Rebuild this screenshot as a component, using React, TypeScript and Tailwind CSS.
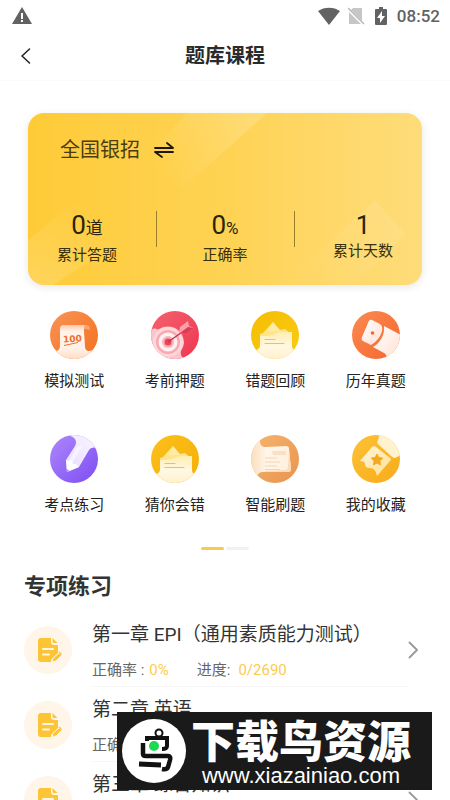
import type { ReactNode } from "react";

type Stat = { value: string; unit?: string; label: string };
type Chapter = { title: string; accuracy: string; progress: string };

const stats: Stat[] = [
  { value: "0", unit: "道", label: "累计答题" },
  { value: "0", unit: "%", label: "正确率" },
  { value: "1", label: "累计天数" },
];

const chapters: Chapter[] = [
  { title: "第一章 EPI（通用素质能力测试）", accuracy: "0%", progress: "0/2690" },
  { title: "第二章 英语", accuracy: "0%", progress: "0/1860" },
  { title: "第三章 综合知识", accuracy: "0%", progress: "0/3120" },
];

// Round badge shared by all menu icons, art is clipped to the circle
function Badge({ id, from, to, children }: { id: string; from: string; to: string; children: ReactNode }) {
  return (
    <svg viewBox="0 0 48 48" className="h-12 w-12" aria-hidden="true">
      <defs>
        <linearGradient id={`${id}-bg`} x1="0" y1="0" x2="1" y2="1">
          <stop offset="0" stopColor={from} />
          <stop offset="1" stopColor={to} />
        </linearGradient>
        <clipPath id={`${id}-clip`}>
          <circle cx="24" cy="24" r="24" />
        </clipPath>
      </defs>
      <g clipPath={`url(#${id}-clip)`}>
        <rect width="48" height="48" fill={`url(#${id}-bg)`} />
        {children}
      </g>
    </svg>
  );
}

function ExamIcon() {
  return (
    <Badge id="exam" from="#f99355" to="#f4701f">
      <defs>
        <linearGradient id="exam-paper" x1="0" y1="0" x2="0" y2="1">
          <stop offset="0" stopColor="#ffc9a8" />
          <stop offset="0.2" stopColor="#fff4ec" />
          <stop offset="0.7" stopColor="#fff1e8" />
          <stop offset="1" stopColor="#ffdcc6" />
        </linearGradient>
      </defs>
      <path d="M14 14h22c-2 1-2 3-2 6l1 15c0 5 3 6 8 4l1 9H2v-9c5 2 8 1 8-5V18c0-3 1-4 4-4z" fill="url(#exam-paper)" />
      <path d="M36 14c3 0 4 2 4 5-1-1-3-1-6-1 0-2 0-4 2-4z" fill="#f9a676" />
      <text x="13" y="31" fontSize="9" fontWeight="700" fontFamily="DejaVu Sans, sans-serif" fill="#ec722f" transform="rotate(-4 22 28)">
        100
      </text>
      <path d="M14 34.500l14-3" stroke="#ec722f" strokeWidth="1" />
    </Badge>
  );
}

function TargetIcon() {
  return (
    <Badge id="target" from="#f4636e" to="#ef3550">
      <path d="M0 20c3-5 5-1 8-2C18 12 32 17 33 31c0 6-4 8-3 12 0 3 2 4 5 3l-9 4H-2z" fill="#fbc5cc" />
      <circle cx="17" cy="31" r="15" fill="#fcd7da" />
      <circle cx="17" cy="31" r="12" fill="#f9a9b1" />
      <circle cx="17" cy="31" r="9.500" fill="#fff1f1" />
      <circle cx="17" cy="31" r="6" fill="#f9b1b8" />
      <circle cx="17" cy="31" r="3.500" fill="#ee4258" />
      <path d="M17 31l20-14" stroke="#c9314b" strokeWidth="1.500" />
      <path d="M28 22l1-6 8-6 1 5 5 2-8 6z" fill="#f9a0a9" />
      <path d="M29 22l8-6 6 1-8 6z" fill="#dd3a54" />
    </Badge>
  );
}

function FolderIcon({ id, from, to }: { id: string; from: string; to: string }) {
  return (
    <Badge id={id} from={from} to={to}>
      <defs>
        <linearGradient id={`${id}-front`} x1="0" y1="0" x2="0" y2="1">
          <stop offset="0" stopColor="#ffeeb0" />
          <stop offset="0.5" stopColor="#fff8e2" />
          <stop offset="1" stopColor="#fff1cf" />
        </linearGradient>
      </defs>
      <path d="M9 23l3-1 10-11 7 8 5-1 6 5v12H9z" fill="#ffe48a" />
      <path d="M16 20l6-9 7 9z" fill="#fff0b6" opacity="0.600" />
      <path d="M9 25c8 0 10 0 14-2l6-2h12v14c0 3 2 5 6 4v10H0V39c6 1 9-1 9-5z" fill={`url(#${id}-front)`} />
      <path d="M14 28.500h10M14 32.500h19" stroke="#f6c23a" strokeWidth="1.200" strokeLinecap="round" />
    </Badge>
  );
}

function TubeIcon() {
  return (
    <Badge id="tube" from="#fc8a50" to="#f4672f">
      <defs>
        <linearGradient id="tube-paper" x1="0" y1="0" x2="1" y2="1">
          <stop offset="0" stopColor="#ffffff" />
          <stop offset="1" stopColor="#ffe0d0" />
        </linearGradient>
      </defs>
      <path d="M32 15l17 9v25H35c0-4-1-6-3-7l-11-6c7-4 12-12 11-21z" fill="url(#tube-paper)" />
      <path d="M20 9l8 4q3 2 2 7c-2 7-6 11-11 14l-8-4q-2-1-1-4l6-14q1-4 4-3z" fill="url(#tube-paper)" />
      <circle cx="20.500" cy="22" r="1.800" fill="#f4672f" />
    </Badge>
  );
}

function PencilIcon() {
  return (
    <Badge id="pencil" from="#ad88fb" to="#7e4df2">
      <defs>
        <linearGradient id="pencil-body" x1="1" y1="0" x2="0" y2="1">
          <stop offset="0" stopColor="#fbf8ff" />
          <stop offset="1" stopColor="#e6dcff" />
        </linearGradient>
      </defs>
      <path d="M16 0c8 1 12 5 9 11l-9 14 1 12 12-5 10-17c3-3 6-3 10-1V-2z" fill="url(#pencil-body)" />
      <path d="M27 12l-8 14 4 1 10-17z" fill="#fff" opacity="0.500" />
      <path d="M16 25l3 1 3-1 1 4 3 0 3 3-12 5z" fill="#fff" />
      <path d="M17 34l3 2-3 1z" fill="#b79bfa" />
    </Badge>
  );
}

function CardIcon() {
  return (
    <Badge id="card" from="#f6b471" to="#e9944c">
      <defs>
        <linearGradient id="card-paper" x1="0" y1="0" x2="1" y2="0">
          <stop offset="0" stopColor="#fbdcba" />
          <stop offset="0.4" stopColor="#fff5e9" />
          <stop offset="1" stopColor="#fff0de" />
        </linearGradient>
      </defs>
      <path d="M-1 8l10-2c0 4 2 6 6 6l20-1q3 0 3 3l2 20q0 3-3 3H14c-4 0-6 0-7 3l-8-2z" fill="url(#card-paper)" />
      <path d="M38 14l2 20q0 3-3 3H14v-1l20-1q3 0 3-3z" fill="#f9dcbb" />
      <path d="M21 16h14v4H22z" fill="#f8d9b5" opacity="0.700" />
      <path d="M14 23h12M14 27h15M14 31h12M14 34.500h15" stroke="#f4cda6" strokeWidth="0.800" />
    </Badge>
  );
}

function TicketIcon() {
  return (
    <Badge id="ticket" from="#fcc235" to="#f9ab1a">
      <defs>
        <linearGradient id="ticket-paper" x1="0" y1="0" x2="1" y2="1">
          <stop offset="0" stopColor="#fff6da" />
          <stop offset="1" stopColor="#ffdf93" />
        </linearGradient>
      </defs>
      <path d="M27 0l22-3v23l-6 3q-2 0-4-2L27 10q-3-2-1-5 1-2 1-5z" fill="#fff2cf" />
      <path d="M20 12q2-2 4 0l14 11q2 1 0 3L25 41c-1-5-3-8-7-8-3 0-5-1-5-4 0-2-2-3-5-3z" fill="url(#ticket-paper)" />
      <path
        d="M25 19l1.800 3.600 3.900.5-2.800 2.800.6 4L25 28l-3.500 1.900.6-4-2.800-2.800 3.900-.5z"
        fill="#f5a91f"
        stroke="#f5a91f"
        strokeLinejoin="round"
      />
    </Badge>
  );
}

const menu = [
  { label: "模拟测试", icon: <ExamIcon /> },
  { label: "考前押题", icon: <TargetIcon /> },
  { label: "错题回顾", icon: <FolderIcon id="review" from="#f4bd05" to="#fbcb12" /> },
  { label: "历年真题", icon: <TubeIcon /> },
  { label: "考点练习", icon: <PencilIcon /> },
  { label: "猜你会错", icon: <FolderIcon id="guess" from="#fcc01b" to="#f5ae08" /> },
  { label: "智能刷题", icon: <CardIcon /> },
  { label: "我的收藏", icon: <TicketIcon /> },
];

function StatusBar() {
  return (
    <div className="flex h-8 shrink-0 items-center justify-between pr-[10px] pl-3 text-[#626262]">
      <svg viewBox="0 0 20 18" className="h-[18px] w-5" fill="currentColor" aria-hidden="true">
        <path fillRule="evenodd" d="M10 0l10 17H0zM9 6v6h2V6zm0 7v2h2v-2z" />
      </svg>
      <div className="flex items-center">
        <svg viewBox="0 0 22 18" className="h-[18px] w-[22px]" fill="currentColor" aria-hidden="true">
          <path d="M0 4C6-.5 16-.5 22 4L11 18z" />
        </svg>
        <svg viewBox="0 0 17 18" className="ml-2 h-[18px] w-[17px]" aria-hidden="true">
          <path d="M5 1h9v13L3 3zM1 5l12 12H1z" fill="#c6c6c6" />
          <path d="M0 1l16 16" stroke="#b5b5b5" strokeWidth="1.300" />
        </svg>
        <svg viewBox="0 0 12 18" className="ml-[10px] h-[18px] w-3" fill="currentColor" aria-hidden="true">
          <path fillRule="evenodd" d="M4 0h4v2h3q1 0 1 1v14q0 1-1 1H1q-1 0-1-1V3q0-1 1-1h3zM7 4l-5 7h3v5l5-7H7z" />
        </svg>
        <span className="ml-[10px] font-[Roboto] text-[17px] leading-6 font-medium">08:52</span>
      </div>
    </div>
  );
}

function StatsCard() {
  return (
    <section className="relative mx-7 mt-8 h-[172px] shrink-0 overflow-hidden rounded-2xl bg-linear-to-r from-[#fecb37] via-[#fed353] to-[#fedc79] shadow-[0_2px_8px_rgba(0,0,0,0.1)]">
      <svg viewBox="0 0 394 172" preserveAspectRatio="none" className="absolute inset-0 h-full w-full" aria-hidden="true">
        <defs>
          <linearGradient id="shine-a" x1="0" y1="0.5" x2="0.8" y2="0.2">
            <stop offset="0" stopColor="#fff" stopOpacity="0" />
            <stop offset="1" stopColor="#fff" stopOpacity="0.16" />
          </linearGradient>
          <linearGradient id="shine-b" x1="0" y1="1" x2="1" y2="0">
            <stop offset="0" stopColor="#fff" stopOpacity="0.18" />
            <stop offset="0.6" stopColor="#fff" stopOpacity="0" />
          </linearGradient>
          <linearGradient id="shine-c" x1="1" y1="0" x2="0" y2="1">
            <stop offset="0" stopColor="#fff" stopOpacity="0.12" />
            <stop offset="0.9" stopColor="#fff" stopOpacity="0" />
          </linearGradient>
        </defs>
        <path d="M153 77l-33-36 39-41h80z" fill="url(#shine-a)" />
        <path d="M0 127L70 70l60 34-105 68H0z" fill="url(#shine-b)" />
        <path d="M347 87l30 34-50 51h-72z" fill="url(#shine-c)" />
      </svg>

      <div className="relative">
        <button type="button" className="mt-[22px] ml-8 flex items-center gap-[14px] text-[20px] leading-[30px] text-[#4c3d10]">
          全国银招
          <svg viewBox="0 0 20 18" className="h-[18px] w-5" fill="none" stroke="#1c1606" strokeWidth="1.800" strokeLinecap="round" strokeLinejoin="round" aria-hidden="true">
            <path d="M1 7h18l-6-5M19 11H1l7 5" />
          </svg>
        </button>
        <dl className="mt-[42px] flex items-start justify-between px-[29px] text-[#3a2f0c]">
          {stats.map((s, i) => (
            <div key={s.label} className="contents">
              {i > 0 && <span className="mt-1 h-9 w-px bg-[#9c7f2a]" />}
              <div className="flex w-[60px] flex-col-reverse items-center">
                <dt className={s.unit ? "mt-1 text-[15px] leading-5" : "text-[15px] leading-5"}>{s.label}</dt>
                <dd className="flex h-[34px] items-baseline font-[Roboto,'Noto_Sans_CJK_SC',sans-serif] text-[26px] leading-9 text-[#2b2309]">
                  {s.value}
                  {s.unit && <span className="text-[17px]">{s.unit}</span>}
                </dd>
              </div>
            </div>
          ))}
        </dl>
      </div>
    </section>
  );
}

function ChapterRow({ title, accuracy, progress }: Chapter) {
  return (
    <li>
      <a href="#" className="flex h-[75px] items-center pr-8 pl-6">
        <svg viewBox="0 0 48 48" className="h-12 w-12 shrink-0" aria-hidden="true">
          <circle cx="24" cy="24" r="24" fill="#fff5e8" />
          <path d="M17 12h10v4q0 3 3 3h4v8l-7 7v2H17q-3 0-3-3V15q0-3 3-3z" fill="#fdc535" />
          <path d="M28.500 12l5 5H30q-1.500 0-1.500-1.500z" fill="#fdc535" />
          <path d="M19 23h10M19 28.500h6" stroke="#fff5e8" strokeWidth="2" strokeLinecap="round" />
          <path d="M28 36l1-4 6-5 3 2-6 6z" fill="#fdc535" stroke="#fff5e8" strokeWidth="1" strokeLinejoin="round" />
          <path d="M35 26l2.500 2.500" stroke="#fdc535" strokeWidth="1.500" />
        </svg>
        <div className="ml-5 h-full min-w-0 flex-1 border-b border-[#f7f7f7] pt-[10px]">
          <h3 className="text-[19px] leading-[26px] whitespace-nowrap text-[#333]">{title}</h3>
          <p className="mt-3 flex text-[15px] leading-5 text-[#666]">
            <span>正确率 :</span>
            <span className="ml-[5px] text-[#fccb52]">{accuracy}</span>
            <span className="ml-7">进度:</span>
            <span className="ml-2 text-[#fccb52]">{progress}</span>
          </p>
        </div>
        <svg viewBox="0 0 10 18" className="h-[18px] w-[10px] shrink-0" fill="none" stroke="#999" strokeWidth="1.800" strokeLinecap="round" strokeLinejoin="round" aria-hidden="true">
          <path d="M1.500 1.500L9 9l-7.500 7.500" />
        </svg>
      </a>
    </li>
  );
}

function SiteBanner() {
  return (
    <aside className="absolute right-[18px] bottom-[10px] flex h-[78px] w-[315px] items-center bg-[#1a1a1a] pl-[5px] text-white">
      <svg viewBox="0 0 64 64" className="h-16 w-16 shrink-0" fill="none" stroke="#111" aria-hidden="true">
        <circle cx="32" cy="32" r="32" fill="#fff" stroke="none" />
        <circle cx="37" cy="14" r="3.500" strokeWidth="2" />
        <path d="M25 22v-3h20v8q0 3-5 3" strokeWidth="4" />
        <path d="M21 24v11q0 2 3 2h22q3 0 2 4l-2 7q-1 3-6 2" strokeWidth="4.500" />
        <path d="M17 45l22 1" strokeWidth="5" />
        <circle cx="32" cy="27" r="5" fill="#1fd655" stroke="none" />
      </svg>
      <div className="flex flex-1 flex-col items-center pt-2 pr-4 whitespace-nowrap">
        <strong className="text-[44px] leading-[42px] font-black [font-style:oblique_6deg]">下载鸟资源</strong>
        <a href="#" className="font-['Liberation_Sans'] text-[22px] leading-6">
          www.xiazainiao.com
        </a>
      </div>
    </aside>
  );
}

export default function App() {
  return (
    <div className="relative flex h-screen flex-col overflow-hidden bg-white font-[Roboto,'Noto_Sans_CJK_SC',sans-serif]" lang="zh-CN">
      <StatusBar />
      <header className="relative flex h-[49px] shrink-0 items-center justify-center border-b border-[#fafafa]">
        <button type="button" aria-label="返回" className="absolute left-5 flex h-8 w-8 items-center">
          <svg viewBox="0 0 12 16" className="h-4 w-3" fill="none" stroke="#222" strokeWidth="1.500" strokeLinecap="round" strokeLinejoin="round" aria-hidden="true">
            <path d="M9.500 1L2 8l7.500 7" />
          </svg>
        </button>
        <h1 className="text-[20px] leading-7 font-bold text-[#2a2a2a]">题库课程</h1>
      </header>

      <StatsCard />

      <nav className="mt-[26px] grid shrink-0 grid-cols-4 gap-y-11 px-6">
        {menu.map((item) => (
          <button key={item.label} type="button" className="flex flex-col items-center gap-3 text-[15px] leading-5 text-[#222]">
            {item.icon}
            {item.label}
          </button>
        ))}
      </nav>
      <div className="mt-8 flex shrink-0 justify-center gap-[2px]">
        <span className="h-[3px] w-[23px] rounded-full bg-[#f9ca4c]" />
        <span className="h-[3px] w-[23px] rounded-full bg-[#f1f1f1]" />
      </div>

      <h2 className="mt-[22px] shrink-0 px-6 text-[22px] leading-[30px] font-bold text-[#333]">专项练习</h2>
      <ul className="mt-[10px] shrink-0">
        {chapters.map((chapter) => (
          <ChapterRow key={chapter.title} {...chapter} />
        ))}
      </ul>

      <SiteBanner />
    </div>
  );
}
